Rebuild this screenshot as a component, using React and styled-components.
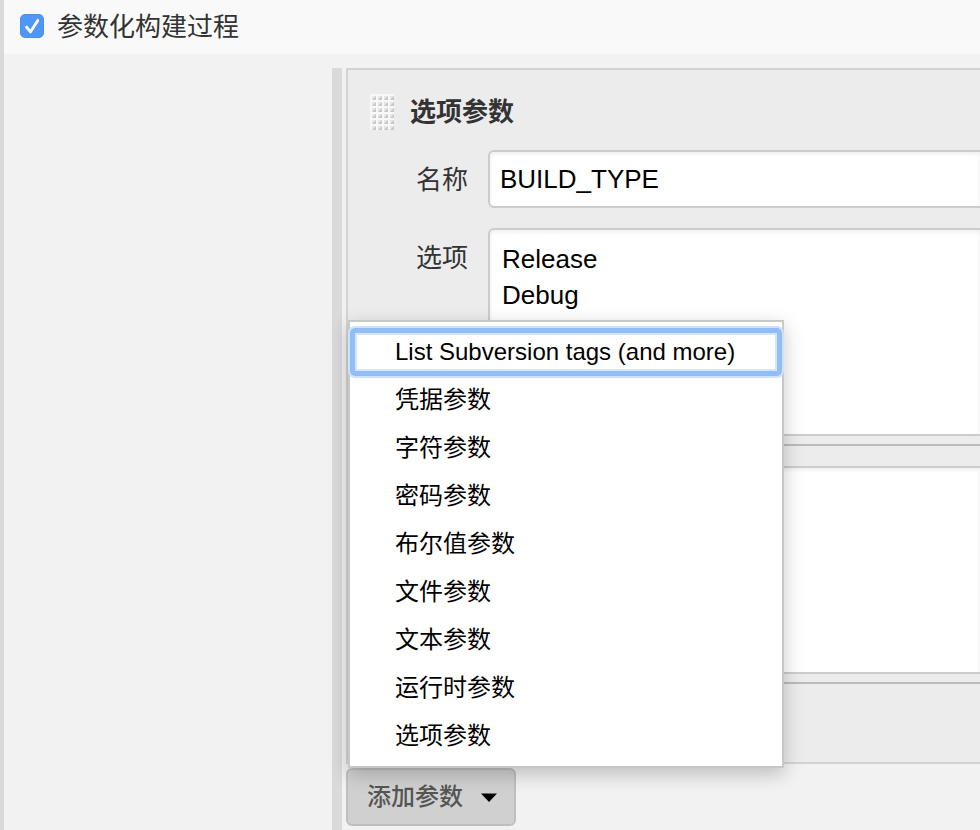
import React from "react";
import styled, { createGlobalStyle } from "styled-components";

const GlobalStyle = createGlobalStyle`
  *, *::before, *::after { box-sizing: border-box; }
  html, body, #root { height: 100%; }
  body {
    margin: 0;
    overflow: hidden;
    background: #f2f2f2;
    color: #333;
    font-family: "Liberation Sans", "Noto Sans CJK SC", sans-serif;
    font-size: 26px;
  }
  button, input, textarea { font: inherit; }
`;

const Page = styled.main`
  display: flex;
  flex-direction: column;
  min-height: 100%;
  border-left: 4px solid #dadada;
`;

const OptionRow = styled.div`
  display: flex;
  align-items: center;
  gap: 13px;
  height: 54px;
  padding: 0 16px 6px;
  background: #f9f9f9;
`;

const CheckWrap = styled.span`
  display: grid;
  width: 24px;
  height: 24px;
  margin-top: 4px;

  > * { grid-area: 1 / 1; }
`;

const CheckBox = styled.input`
  appearance: none;
  width: 24px;
  height: 24px;
  margin: 0;
  border: 1px solid #4a90ee;
  border-radius: 5px;
  background: #f9f9f9;

  &:checked { background: #4e97f8; }
`;

const CheckMark = styled.svg`
  pointer-events: none;
`;

const Body = styled.div`
  display: flex;
  flex: 1;
  padding: 14px 0 0 328px;
`;

const Rail = styled.div`
  flex: 0 0 10px;
  margin-right: 4px;
  background: #dadada;
`;

const Content = styled.div`
  flex: 1;
  min-width: 0;
`;

const Panel = styled.section`
  margin-bottom: 4px;
  padding: 20px 0 78px;
  border: 2px solid #d3d3d3;
  border-right: 0;
  background: #ececec;
`;

const PanelHeader = styled.header`
  display: flex;
  align-items: center;
  gap: 16px;
  height: 44px;
  margin-bottom: 16px;
  padding-left: 22px;
`;

const PanelTitle = styled.h2`
  margin: 0;
  font-size: 26px;
  font-weight: 700;
  line-height: 36px;
`;

const Field = styled.div`
  display: grid;
  grid-template-columns: 120px 1fr;
  column-gap: 20px;
  margin-bottom: 20px;

  &:last-child { margin-bottom: 0; }
`;

const FieldLabel = styled.label`
  padding-top: 12px;
  line-height: 36px;
  text-align: right;
`;

const TextInput = styled.input`
  width: 100%;
  height: 58px;
  padding: 0 10px;
  border: 2px solid #ccc;
  border-right: 0;
  border-radius: 6px 0 0 6px;
  outline: 0;
  background: #fff;
  box-shadow: inset 0 2px 4px #eee;
  color: #000;
`;

const TextArea = styled.textarea`
  display: block;
  width: 100%;
  height: 208px;
  padding: 11px 12px;
  border: 2px solid #ccc;
  border-right: 0;
  border-radius: 6px 0 0 6px;
  outline: 0;
  background: #fff;
  box-shadow: inset 0 2px 4px #eee;
  color: #000;
  line-height: 36px;
  resize: none;
`;

const ResizeHandle = styled.div`
  height: 10px;
  border-bottom: 2px solid #bbb;
`;

const Dropdown = styled.div`
  position: relative;
  display: inline-block;
`;

const DropdownButton = styled.button`
  display: flex;
  align-items: center;
  gap: 18px;
  height: 58px;
  padding: 0 17px 0 19px;
  border: 2px solid #bfbfbf;
  border-radius: 6px;
  background: #d0d0d0;
  color: #555;
  font-size: 24px;
  font-weight: 500;
`;

const ButtonText = styled.span`
  padding-bottom: 6px;
`;

const Menu = styled.ul`
  position: absolute;
  bottom: 100%;
  left: 2px;
  width: 436px;
  margin: 0;
  padding: 6px 0;
  border: 2px solid #c8c8c8;
  background: #fff;
  box-shadow: 0 6px 18px rgba(0, 0, 0, 0.22);
  list-style: none;
`;

const MenuItem = styled.button`
  display: block;
  position: relative;
  z-index: ${({ $focused }) => ($focused ? 1 : 0)};
  width: 100%;
  height: 48px;
  padding: 0 45px;
  border: 0;
  border-radius: 5px;
  outline: 0;
  background: #fff;
  box-shadow: ${({ $focused }) =>
    $focused
      ? "0 0 0 2px #cfe2fc, inset 0 0 0 5px #93bdf5, inset 0 0 0 7px #d3e5fd"
      : "none"};
  color: #000;
  font-size: 24px;
  line-height: 48px;
  text-align: left;
  white-space: nowrap;
`;

const menuItems = [
  "List Subversion tags (and more)",
  "凭据参数",
  "字符参数",
  "密码参数",
  "布尔值参数",
  "文件参数",
  "文本参数",
  "运行时参数",
  "选项参数",
];

const gripCells = Array.from({ length: 24 }, (_, i) => ({
  x: (i % 4) * 6,
  y: Math.floor(i / 4) * 6,
}));

function Grip() {
  return (
    <svg width="24" height="36" viewBox="0 0 24 36" aria-hidden="true">
      <rect width="24" height="36" fill="#f8f8f8" />
      {gripCells.map(({ x, y }) => (
        <g key={`${x}-${y}`}>
          <path d={`M${x + 2} ${y + 2}h4v4h-4z`} fill="#e6e6e6" />
          <path d={`M${x + 2} ${y + 6}l4-4v4z`} fill="#c8c8c8" />
        </g>
      ))}
    </svg>
  );
}

export default function App() {
  return (
    <>
      <GlobalStyle />
      <Page>
        <OptionRow>
          <CheckWrap>
            <CheckBox id="parameterized" type="checkbox" defaultChecked />
            <CheckMark width="24" height="24" viewBox="0 0 24 24" aria-hidden="true">
              <path
                d="M6.5 13l4 4.8 7.3-11.3"
                fill="none"
                stroke="#fff"
                strokeWidth="2.8"
                strokeLinecap="round"
                strokeLinejoin="round"
              />
            </CheckMark>
          </CheckWrap>
          <label htmlFor="parameterized">参数化构建过程</label>
        </OptionRow>
        <Body>
          <Rail />
          <Content>
            <Panel>
              <PanelHeader>
                <Grip />
                <PanelTitle>选项参数</PanelTitle>
              </PanelHeader>
              <Field>
                <FieldLabel htmlFor="name">名称</FieldLabel>
                <TextInput id="name" type="text" defaultValue="BUILD_TYPE" />
              </Field>
              <Field>
                <FieldLabel htmlFor="choices">选项</FieldLabel>
                <div>
                  <TextArea id="choices" defaultValue={"Release\nDebug"} />
                  <ResizeHandle />
                </div>
              </Field>
              <Field>
                <span />
                <div>
                  <TextArea aria-label="描述" />
                  <ResizeHandle />
                </div>
              </Field>
            </Panel>
            <Dropdown>
              <DropdownButton type="button" aria-haspopup="menu" aria-expanded="true">
                <ButtonText>添加参数</ButtonText>
                <svg width="16" height="9" viewBox="0 0 16 9" aria-hidden="true">
                  <path d="M0 0.5h16L8 9z" fill="#000" />
                </svg>
              </DropdownButton>
              <Menu role="menu">
                {menuItems.map((item, index) => (
                  <li key={item} role="none">
                    <MenuItem type="button" role="menuitem" $focused={index === 0}>
                      {item}
                    </MenuItem>
                  </li>
                ))}
              </Menu>
            </Dropdown>
          </Content>
        </Body>
      </Page>
    </>
  );
}
